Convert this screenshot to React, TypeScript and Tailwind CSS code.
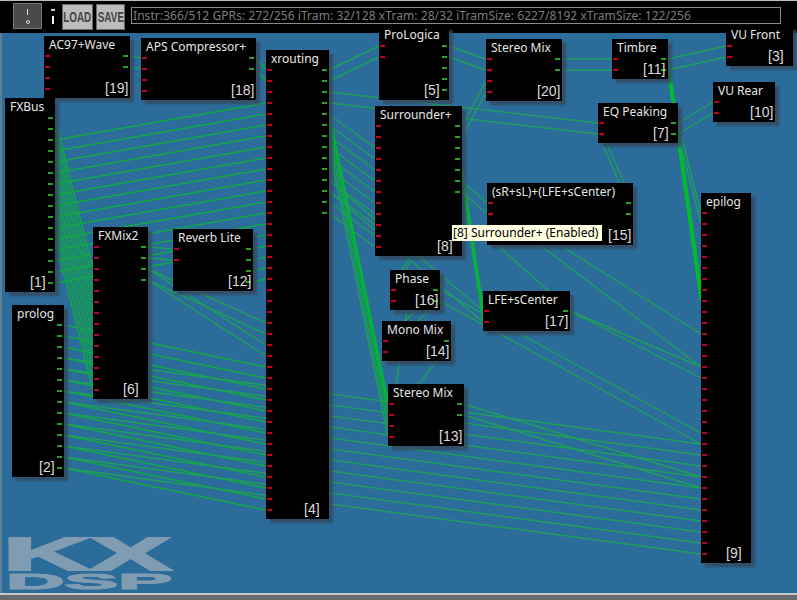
type NodeBox = { id: number; name: string; x: number; y: number; w: number; h: number; ins: number; outs: number };

const nodes: NodeBox[] = [
  { id: 19, name: "AC97+Wave", x: 44, y: 36, w: 86, h: 62, ins: 4, outs: 2 },
  { id: 18, name: "APS Compressor+", x: 141, y: 38, w: 115, h: 62, ins: 4, outs: 2 },
  { id: 1, name: "FXBus", x: 5, y: 98, w: 50, h: 194, ins: 0, outs: 16 },
  { id: 4, name: "xrouting", x: 266, y: 50, w: 63, h: 469, ins: 41, outs: 14 },
  { id: 5, name: "ProLogica", x: 379, y: 26, w: 70, h: 74, ins: 2, outs: 5 },
  { id: 20, name: "Stereo Mix", x: 486, y: 39, w: 76, h: 62, ins: 4, outs: 2 },
  { id: 11, name: "Timbre", x: 612, y: 39, w: 56, h: 40, ins: 2, outs: 2 },
  { id: 3, name: "VU Front", x: 726, y: 26, w: 67, h: 40, ins: 2, outs: 0 },
  { id: 10, name: "VU Rear", x: 713, y: 82, w: 62, h: 40, ins: 2, outs: 0 },
  { id: 7, name: "EQ Peaking", x: 598, y: 103, w: 80, h: 40, ins: 2, outs: 2 },
  { id: 8, name: "Surrounder+", x: 375, y: 106, w: 87, h: 150, ins: 12, outs: 7 },
  { id: 15, name: "(sR+sL)+(LFE+sCenter)", x: 487, y: 183, w: 146, h: 62, ins: 2, outs: 2 },
  { id: 16, name: "Phase", x: 390, y: 270, w: 50, h: 40, ins: 2, outs: 2 },
  { id: 17, name: "LFE+sCenter", x: 483, y: 291, w: 87, h: 40, ins: 2, outs: 1 },
  { id: 14, name: "Mono Mix", x: 382, y: 321, w: 69, h: 40, ins: 2, outs: 1 },
  { id: 13, name: "Stereo Mix", x: 388, y: 384, w: 76, h: 62, ins: 4, outs: 2 },
  { id: 6, name: "FXMix2", x: 93, y: 227, w: 55, h: 172, ins: 14, outs: 4 },
  { id: 12, name: "Reverb Lite", x: 173, y: 229, w: 80, h: 62, ins: 2, outs: 4 },
  { id: 2, name: "prolog", x: 12, y: 305, w: 52, h: 172, ins: 0, outs: 14 },
  { id: 9, name: "epilog", x: 701, y: 193, w: 50, h: 370, ins: 32, outs: 0 },
];

// from node, out pin, to node, in pin, weight (0 faint, 1 normal, 2 thick)
type Wire = [number, number, number, number, number];

const wires: Wire[] = [
  [19, 0, 18, 0, 0],
  [19, 1, 18, 1, 0],
  [18, 0, 4, 0, 1],
  [18, 1, 4, 1, 1],
  [6, 0, 12, 0, 0],
  [6, 1, 12, 1, 0],
  [6, 2, 4, 25, 0],
  [6, 3, 4, 26, 0],
  [6, 2, 4, 23, 0],
  [6, 3, 4, 24, 0],
  [12, 0, 4, 16, 0],
  [12, 1, 4, 17, 0],
  [12, 2, 4, 18, 1],
  [12, 3, 4, 19, 1],
  [4, 0, 5, 0, 0],
  [4, 1, 5, 1, 0],
  [4, 2, 7, 0, 0],
  [4, 3, 7, 1, 0],
  [4, 4, 13, 0, 2],
  [4, 5, 13, 1, 1],
  [4, 6, 13, 2, 1],
  [4, 7, 13, 3, 0],
  [4, 10, 17, 0, 0],
  [4, 11, 17, 1, 0],
  [5, 0, 20, 0, 0],
  [5, 1, 20, 1, 0],
  [5, 3, 8, 7, 1],
  [8, 0, 20, 2, 0],
  [8, 1, 20, 3, 0],
  [8, 3, 16, 1, 0],
  [8, 4, 16, 0, 0],
  [8, 4, 17, 0, 2],
  [8, 5, 17, 1, 1],
  [8, 5, 15, 0, 0],
  [8, 6, 15, 1, 0],
  [15, 0, 7, 0, 0],
  [15, 1, 7, 1, 0],
  [16, 0, 14, 0, 0],
  [16, 1, 14, 1, 0],
  [16, 0, 9, 20, 0],
  [16, 1, 9, 21, 0],
  [17, 0, 9, 14, 0],
  [17, 0, 9, 15, 0],
  [14, 0, 13, 2, 0],
  [20, 0, 11, 0, 0],
  [20, 1, 11, 1, 0],
  [11, 0, 3, 0, 0],
  [11, 1, 3, 1, 0],
  [11, 0, 9, 7, 2],
  [11, 1, 9, 8, 2],
  [7, 0, 10, 0, 0],
  [7, 1, 10, 1, 0],
  [7, 0, 9, 0, 0],
  [7, 1, 9, 1, 0],
  [13, 0, 9, 24, 0],
  [13, 1, 9, 25, 0],
  ...Array.from({ length: 14 }, (_, i): Wire => [1, i + 2, 4, i + 3, 1]),
  ...Array.from({ length: 12 }, (_, i): Wire => [1, i, 6, i + 2, 1]),
  ...Array.from({ length: 14 }, (_, i): Wire => [2, i, 4, i + 27, 1]),
  ...Array.from({ length: 11 }, (_, i): Wire => [2, i + 3, 9, i + 21, 0]),
  ...Array.from({ length: 10 }, (_, i): Wire => [4, i + 4, 8, i + 2, 0]),
];

// stray runs that pass behind the boxes
const extras = [
  [410, 290, 396, 384],
  [497, 245, 570, 310],
  [563, 247, 701, 334],
  [540, 245, 701, 367],
];

const byId = (id: number) => nodes.find((n) => n.id === id)!;
const pinY = (n: NodeBox, i: number) => n.y + 20 + i * 11;

const wireClass = ["stroke-[#1fa05a]", "stroke-[#12a844]", "stroke-[#00bb2e]"];
const wireWidth = [1.4, 1.5, 2.5];

const Wires = () => (
  <svg className="absolute left-0 top-0" width={797} height={560} viewBox="0 33 797 560" fill="none">
    <text
      x={3}
      y={570}
      textLength={168}
      lengthAdjust="spacingAndGlyphs"
      fontSize={47}
      fontFamily="'Liberation Sans', sans-serif"
      fontWeight={700}
      className="fill-[#7f9cb3] stroke-[#7f9cb3] stroke-[2px]"
    >
      KX
    </text>
    <text
      x={6}
      y={589}
      textLength={166}
      lengthAdjust="spacingAndGlyphs"
      fontSize={22}
      fontFamily="'Liberation Sans', sans-serif"
      fontWeight={700}
      className="fill-[#7f9cb3] stroke-[#7f9cb3] stroke-[1px]"
    >
      DSP
    </text>
    {extras.map(([x1, y1, x2, y2], i) => (
      <line key={i} x1={x1} y1={y1} x2={x2} y2={y2} className="stroke-[#1fa05a]" strokeWidth={1.4} />
    ))}
    {wires.map(([a, o, b, p, w], i) => {
      const from = byId(a);
      const to = byId(b);
      return (
        <line
          key={i}
          x1={from.x + from.w}
          y1={pinY(from, o)}
          x2={to.x}
          y2={pinY(to, p)}
          className={wireClass[w]}
          strokeWidth={wireWidth[w]}
        />
      );
    })}
  </svg>
);

const Box = ({ node }: { node: NodeBox }) => (
  <div
    className="absolute bg-black text-[12px] leading-[14px] text-[#e6e6e6] shadow-[4px_4px_2px_rgba(52,72,92,0.8)]"
    style={{ left: node.x, top: node.y - 33, width: node.w, height: node.h }}
  >
    <span className="absolute left-[5px] top-[2px] whitespace-nowrap">{node.name}</span>
    {Array.from({ length: node.ins }, (_, i) => (
      <i key={i} className="absolute left-[1px] h-[2px] w-[5px] bg-[#c00020]" style={{ top: 19 + i * 11 }} />
    ))}
    {Array.from({ length: node.outs }, (_, i) => (
      <i key={i} className="absolute right-[2px] h-[2px] w-[5px] bg-[#2ca02c]" style={{ top: 19 + i * 11 }} />
    ))}
    <span className="absolute bottom-[3px] right-0 w-[25px] whitespace-nowrap font-['Liberation_Sans',sans-serif] text-[14px] font-normal text-[#dcdcdc]">
      [{node.id}]
    </span>
  </div>
);

export default function App() {
  return (
    <div className="flex h-[600px] w-[797px] flex-col overflow-hidden bg-black font-['Noto_Sans',sans-serif]">
      <div className="flex h-[33px] shrink-0 items-start border-t border-[#b8c0c0] bg-black">
        <button className="ml-[13px] mt-[2px] flex h-[26px] w-[29px] flex-col items-center justify-center gap-[5px] border border-[#777] bg-[#4a4a4a]">
          <span className="h-[6px] w-[1px] bg-[#ddd]" />
          <span className="h-[4px] w-[4px] rounded-full border border-[#ddd]" />
        </button>
        <div className="ml-[9px] mt-[8px] flex w-[3px] flex-col items-center gap-[5px]">
          <span className="h-[2px] w-[4px] bg-[#d8c8c8]" />
          <span className="h-[8px] w-[2px] bg-[#eee]" />
        </div>
        <button className="ml-[8px] mt-[3px] flex h-[26px] w-[31px] items-center justify-center border border-[#666] bg-[#bcbcbc] font-['Liberation_Sans',sans-serif] text-[15px] font-bold text-[#444]">
          <span className="inline-block scale-x-[0.66]">LOAD</span>
        </button>
        <button className="ml-[3px] mt-[3px] flex h-[26px] w-[29px] items-center justify-center border border-[#666] bg-[#bcbcbc] font-['Liberation_Sans',sans-serif] text-[15px] font-bold text-[#444]">
          <span className="inline-block scale-x-[0.66]">SAVE</span>
        </button>
        <div className="ml-[6px] mt-[6px] h-[17px] w-[650px] overflow-hidden whitespace-nowrap border border-[#8a8a8a] pl-[1px] text-[12px] leading-[15px] tracking-[0.07px] text-[#7c7c7c]">
          Instr:366/512 GPRs: 272/256 iTram: 32/128 xTram: 28/32 iTramSize: 6227/8192 xTramSize: 122/256
        </div>
      </div>
      <div className="relative flex-1 border-l-2 border-[#5d7f96] bg-[#2b6c9b]">
        <div className="absolute -left-[2px] top-0">
          <Wires />
          {nodes.map((n) => (
            <Box key={n.id} node={n} />
          ))}
          <div className="absolute left-[452px] top-[192px] h-[16px] w-[150px] whitespace-nowrap bg-[#ffffe1] pl-[1px] text-[12px] leading-[16px] text-black">
            [8] Surrounder+ (Enabled)
          </div>
        </div>
      </div>
      <div className="h-[7px] shrink-0 border-t-2 border-[#c4c8c8] bg-[#6a6a6a]" />
    </div>
  );
}
